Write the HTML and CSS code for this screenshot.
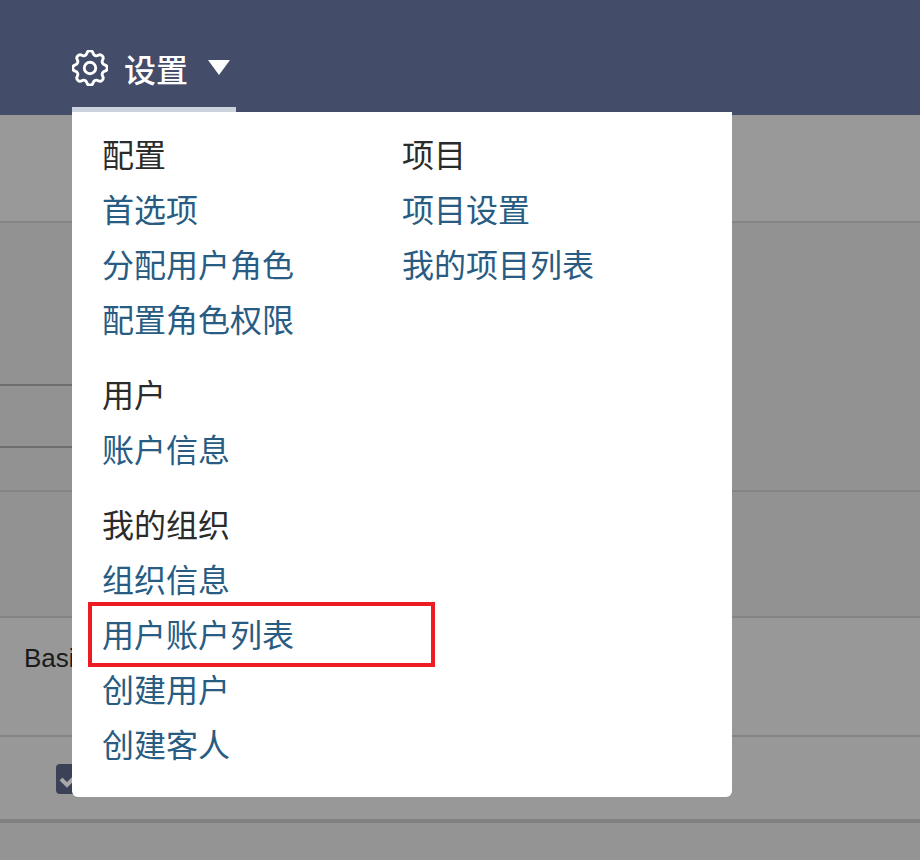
FILE: index.html
```html
<!DOCTYPE html>
<html lang="zh-CN">
<head>
    <meta charset="UTF-8">
    <meta name="viewport" content="width=device-width, initial-scale=1.0">
    <title>设置</title>
    <link rel="stylesheet" href="styles.css">
</head>
<body>
    <header class="topbar">
        <div class="settings-tab">
            <svg class="gear" viewBox="2.6 2.6 18.8 18.8" fill="none" stroke="#fff" stroke-width="1.5" stroke-linecap="round" stroke-linejoin="round">
                <path d="M10.325 4.317c.426-1.756 2.924-1.756 3.35 0a1.724 1.724 0 002.573 1.066c1.543-.94 3.31.826 2.37 2.37a1.724 1.724 0 001.065 2.572c1.756.426 1.756 2.924 0 3.35a1.724 1.724 0 00-1.066 2.573c.94 1.543-.826 3.31-2.37 2.37a1.724 1.724 0 00-2.572 1.065c-.426 1.756-2.924 1.756-3.35 0a1.724 1.724 0 00-2.573-1.066c-1.543.94-3.31-.826-2.37-2.37a1.724 1.724 0 00-1.065-2.572c-1.756-.426-1.756-2.924 0-3.35a1.724 1.724 0 001.066-2.573c-.94-1.543.826-3.31 2.37-2.37.996.608 2.296.07 2.572-1.065z"/>
                <circle cx="12" cy="12" r="3"/>
            </svg>
            <span class="tab-label">设置</span>
            <span class="caret"></span>
        </div>
    </header>

    <main class="backdrop">
        <div class="row row-a"></div>
        <div class="row row-b">
            <div class="subline subline-1"></div>
            <div class="subline subline-2"></div>
        </div>
        <div class="row row-c"></div>
        <div class="row row-d"><span class="row-text">Basic</span></div>
        <div class="row row-e">
            <span class="checkbox">
                <svg viewBox="0 0 30 30" fill="none" stroke="#a8a8a8" stroke-width="4">
                    <polyline points="5,15 11,21 23,9"/>
                </svg>
            </span>
        </div>
        <div class="row row-f"></div>
    </main>

    <nav class="dropdown">
        <div class="menu-col">
            <section class="menu-group">
                <h3>配置</h3>
                <a href="#">首选项</a>
                <a href="#">分配用户角色</a>
                <a href="#">配置角色权限</a>
            </section>
            <section class="menu-group">
                <h3>用户</h3>
                <a href="#">账户信息</a>
            </section>
            <section class="menu-group">
                <h3>我的组织</h3>
                <a href="#">组织信息</a>
                <a href="#" class="marked">用户账户列表</a>
                <a href="#">创建用户</a>
                <a href="#">创建客人</a>
            </section>
        </div>
        <div class="menu-col">
            <section class="menu-group">
                <h3>项目</h3>
                <a href="#">项目设置</a>
                <a href="#">我的项目列表</a>
            </section>
        </div>
    </nav>
</body>
</html>
```
FILE: styles.css
```css
* {
    box-sizing: border-box;
}
html, body {
    height: 100%;
}
body {
    margin: 0;
    height: 860px;
    overflow: hidden;
    position: relative;
    background: #949494;
    font-family: "Liberation Sans", "Noto Sans CJK SC", sans-serif;
}
.topbar {
    height: 115px;
    background: #434c69;
    padding: 0 0 3px 72px;
    display: flex;
    align-items: flex-end;
}
.settings-tab {
    width: 164px;
    height: 84px;
    display: flex;
    align-items: center;
    border-bottom: 5px solid #cbd3df;
    color: #fff;
}
.gear {
    width: 36px;
    height: 36px;
    flex: none;
}
.tab-label {
    font-family: "Noto Sans CJK SC", sans-serif;
    font-size: 32px;
    font-weight: 500;
    line-height: 40px;
    margin-left: 16px;
}
.caret {
    width: 0;
    height: 0;
    margin-left: 20px;
    border-left: 11px solid transparent;
    border-right: 11px solid transparent;
    border-top: 15px solid #fff;
}
.backdrop {
    display: flex;
    flex-direction: column;
}
.row {
    position: relative;
    border-bottom: 2px solid #848484;
}
.row-a {
    height: 108px;
    background: #999;
}
.row-b {
    height: 269px;
    background: #929292;
}
.row-c {
    height: 126px;
    background: #929292;
}
.row-d {
    height: 119px;
    background: #989898;
}
.row-e {
    height: 86px;
    background: #989898;
    border-bottom: 4px solid #808080;
}
.row-f {
    height: 40px;
    border-bottom: 0;
}
.subline {
    position: absolute;
    left: 0;
    width: 72px;
    height: 2px;
    background: #6e6e6e;
}
.subline-1 {
    top: 161px;
}
.subline-2 {
    top: 223px;
}
.row-text {
    position: absolute;
    left: 24px;
    top: 25px;
    font-size: 26px;
    line-height: 30px;
    color: #1a1a1a;
}
.checkbox {
    position: absolute;
    left: 56px;
    top: 27px;
    width: 30px;
    height: 30px;
    border-radius: 4px;
    background: #3b4157;
}
.checkbox svg {
    display: block;
    width: 30px;
    height: 30px;
}
.dropdown {
    position: absolute;
    left: 72px;
    top: 112px;
    width: 660px;
    height: 685px;
    display: flex;
    background: #fff;
    border-radius: 0 0 6px 6px;
    padding: 14px 0 0 30px;
    font-family: "Noto Sans CJK SC", sans-serif;
    font-size: 32px;
    line-height: 55px;
}
.menu-col {
    width: 300px;
}
.menu-group {
    margin-bottom: 20px;
}
.menu-group h3 {
    margin: 0;
    font-size: 32px;
    font-weight: 400;
    color: #2b2b2b;
}
.menu-group a {
    display: block;
    color: #285c82;
    text-decoration: none;
}
.marked {
    position: relative;
}
.marked::after {
    content: "";
    box-sizing: border-box;
    position: absolute;
    left: -14px;
    top: -4px;
    width: 347px;
    height: 65px;
    border: 4px solid #ed1c24;
}
```
